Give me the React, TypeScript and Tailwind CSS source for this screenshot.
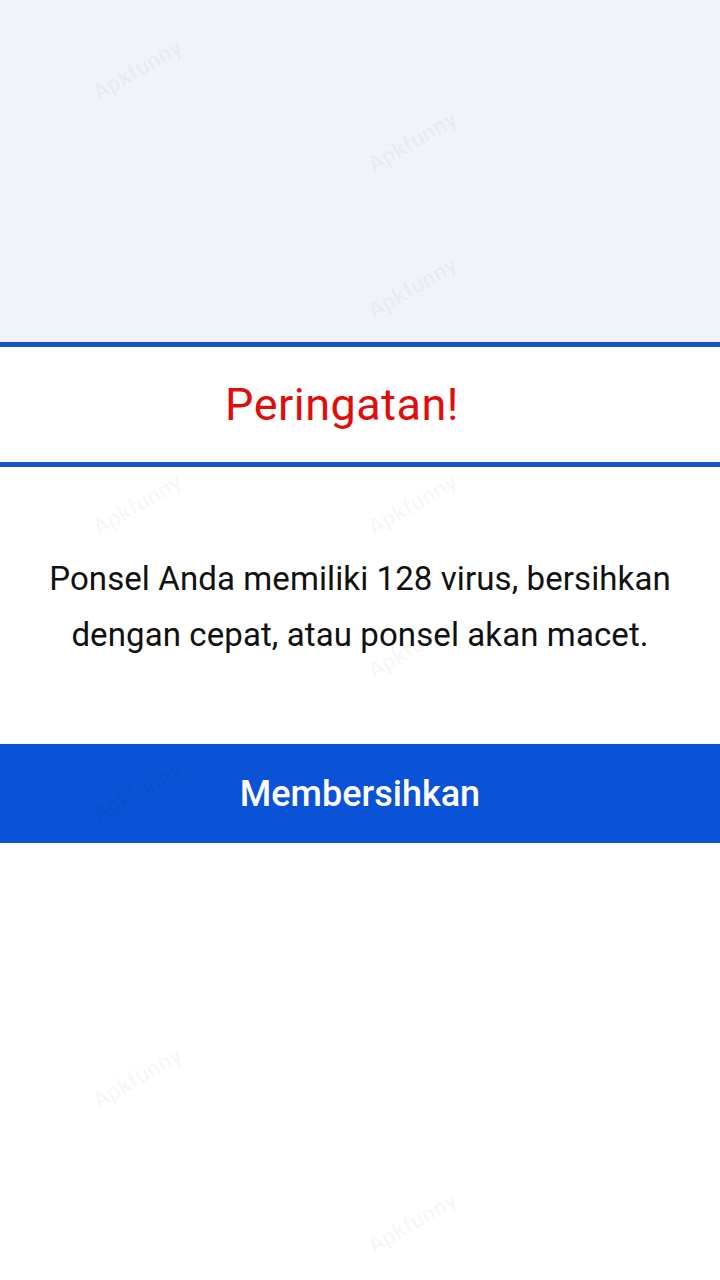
import React from "react";

const marks: { x: number; y: number }[] = [
  { x: 95, y: 40 },
  { x: 370, y: 112 },
  { x: 370, y: 258 },
  { x: 95, y: 475 },
  { x: 370, y: 475 },
  { x: 370, y: 618 },
  { x: 95, y: 762 },
  { x: 95, y: 1048 },
  { x: 370, y: 1193 },
];

export default function App() {
  return (
    <div
      className="relative w-[720px] h-[1280px] overflow-hidden bg-white"
      style={{ fontFamily: "Roboto, 'Noto Sans', sans-serif" }}
    >
      <div className="h-[342px] bg-[#f0f3f8]" />
      <div className="h-[5px] bg-[#1653c9]" />
      <div className="h-[115px] flex items-center justify-center pr-[36px]">
        <span className="text-[45px] leading-none text-[#e00d0d] tracking-[0.5px]">
          Peringatan!
        </span>
      </div>
      <div className="h-[5px] bg-[#1653c9]" />
      <div className="h-[277px] flex flex-col items-center pt-[84px]">
        <p className="text-[33px] leading-[56px] text-[#111] text-center tracking-[0.1px]">
          Ponsel Anda memiliki 128 virus, bersihkan
          <br />
          dengan cepat, atau ponsel akan macet.
        </p>
      </div>
      <div className="h-[99px] bg-[#0a52d6] flex items-center justify-center">
        <span className="text-[36px] font-medium text-white leading-none">
          Membersihkan
        </span>
      </div>

      {/* faint diagonal watermark */}
      {marks.map((m, i) => (
        <span
          key={i}
          aria-hidden="true"
          className="absolute text-[23px] font-bold text-black/[0.03] -rotate-[30deg] origin-left pointer-events-none select-none"
          style={{ left: m.x, top: m.y + 38 }}
        >
          Apkfunny
        </span>
      ))}
    </div>
  );
}
